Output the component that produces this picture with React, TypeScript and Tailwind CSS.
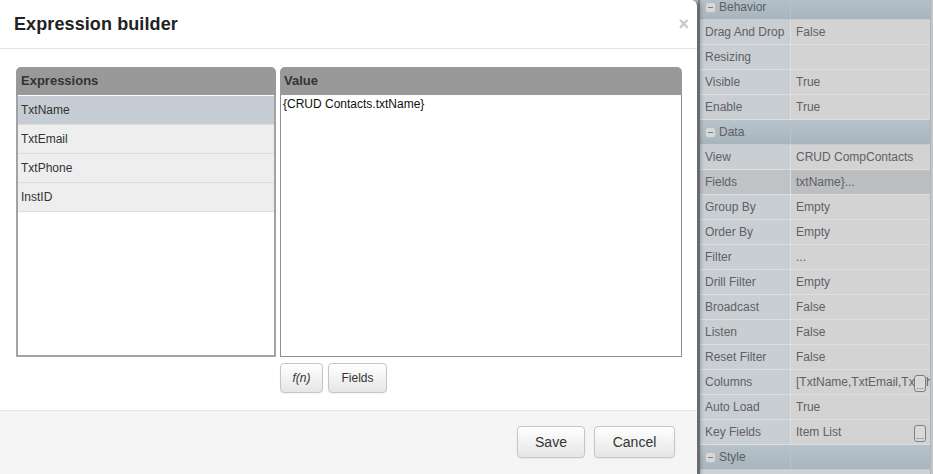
import React from 'react';

type Row = { label: string; value?: string; header?: boolean; selected?: boolean; dots?: boolean };

const rows: Row[] = [
  { label: 'Behavior', header: true },
  { label: 'Drag And Drop', value: 'False' },
  { label: 'Resizing', value: '' },
  { label: 'Visible', value: 'True' },
  { label: 'Enable', value: 'True' },
  { label: 'Data', header: true },
  { label: 'View', value: 'CRUD CompContacts' },
  { label: 'Fields', value: 'txtName}...', selected: true },
  { label: 'Group By', value: 'Empty' },
  { label: 'Order By', value: 'Empty' },
  { label: 'Filter', value: '...' },
  { label: 'Drill Filter', value: 'Empty' },
  { label: 'Broadcast', value: 'False' },
  { label: 'Listen', value: 'False' },
  { label: 'Reset Filter', value: 'False' },
  { label: 'Columns', value: '[TxtName,TxtEmail,TxtPhone,InstID]', dots: true },
  { label: 'Auto Load', value: 'True' },
  { label: 'Key Fields', value: 'Item List', dots: true },
  { label: 'Style', header: true },
];

const expressions = ['TxtName', 'TxtEmail', 'TxtPhone', 'InstID'];

function Minus() {
  return (
    <span className="inline-flex items-center justify-center w-[11px] h-[11px] rounded-[3px] bg-[#d6d8da] border border-[#b9bcbf] mr-[3px]">
      <span className="block w-[5px] h-px bg-[#7a7d80]" />
    </span>
  );
}

function PropertyGrid() {
  return (
    <div className="flex-1 min-w-0 h-full bg-[#cfd2d4] border-l-2 border-[#8a8d90] overflow-hidden flex">
      <div className="flex-1 min-w-0 -mt-[5px]">
        {rows.map((r, i) =>
          r.header ? (
            <div key={i} className="flex h-[25px] bg-gradient-to-b from-[#b7c2ca] to-[#a8b5bf] border-b border-[#c4ccd2]">
              <div className="w-[91px] shrink-0 flex items-center pl-[5px] text-[12px] text-[#5c6064] border-r border-[#b9c3ca]">
                <Minus />
                {r.label}
              </div>
              <div className="flex-1" />
            </div>
          ) : (
            <div key={i} className="flex h-[25px] border-b border-[#dcdee0]">
              <div
                className={`w-[91px] shrink-0 flex items-center pl-[5px] text-[12px] text-[#5e6166] border-r border-[#dcdee0] whitespace-nowrap overflow-hidden ${
                  r.selected ? 'bg-[#bfc3c6]' : 'bg-[#c9ced2]'
                }`}>
                {r.label}
              </div>
              <div
                className={`relative flex-1 min-w-0 flex pl-[5px] text-[12px] text-[#5e6166] whitespace-nowrap overflow-hidden ${
                  r.selected ? 'bg-[#bcbec0] items-start pt-[3px]' : 'bg-[#d3d3d3] items-center'
                }`}>
                {r.value}
                {r.dots &&
                  <span className="absolute right-[4px] top-[5px] w-[12px] h-[17px] rounded-[3px] border border-[#7d7f82] bg-[#d9d9d9] text-[9px] leading-[20px] text-center text-[#555]">
                    ...
                  </span>
                }
              </div>
            </div>
          )
        )}
      </div>
      <div className="w-[3px] shrink-0 bg-[#c3c5c7] border-l border-[#b3b5b7]" />
    </div>
  );
}

function Btn({ children, className = '' }: { children: React.ReactNode; className?: string }) {
  return (
    <button
      className={`border border-[#c5c5c5] rounded-[4px] bg-gradient-to-b from-white to-[#e6e6e6] text-[#333] shadow-[inset_0_1px_0_rgba(255,255,255,0.6),0_1px_2px_rgba(0,0,0,0.05)] ${className}`}>
      {children}
    </button>
  );
}

function Modal() {
  return (
    <div className="w-[698px] h-[500px] shrink-0 bg-white rounded-tr-[6px] border-r border-[#6b6d70] shadow-[2px_0_4px_rgba(0,0,0,0.35)] flex flex-col z-10">
      <div className="h-[49px] shrink-0 flex items-center justify-between pl-[14px] pr-[8px] border-b border-[#e5e5e5]">
        <h1 className="text-[18px] font-bold text-[#222] tracking-[0.1px] mt-[1px]">Expression builder</h1>
        <span className="text-[18px] font-bold text-[#c8c8c8] leading-none">×</span>
      </div>

      <div className="shrink-0 pt-[18px] pl-[16px] pb-[17px]">
        <div className="flex gap-[4px] h-[290px]">
          <div className="w-[260px] flex flex-col">
            <div className="h-[28px] shrink-0 bg-[#999] rounded-t-[5px] flex items-center pl-[5px] text-[13px] font-bold text-[#333]">
              Expressions
            </div>
            <div className="flex-1 border-2 border-t-0 border-[#a3a3a3] bg-white pt-[1px]">
              {expressions.map((e, i) =>
                <div
                  key={e}
                  className={`h-[29px] flex items-center pl-[3px] text-[12px] text-[#333] border-b border-[#dcdcdc] ${
                    i === 0 ? 'bg-[#c5ccd3]' : 'bg-[#eeeeee]'
                  }`}>
                  {e}
                </div>
              )}
            </div>
          </div>

          <div className="w-[402px] flex flex-col">
            <div className="h-[28px] shrink-0 bg-[#999] rounded-t-[5px] flex items-center pl-[4px] text-[13px] font-bold text-[#333]">
              Value
            </div>
            <div className="flex-1 border border-t-0 border-[#8f8f8f] bg-white pl-[2px] text-[12px] text-[#111]">
              {'{CRUD Contacts.txtName}'}
            </div>
          </div>
        </div>

        <div className="flex gap-[5px] pl-[264px] mt-[6px]">
          <Btn className="w-[43px] h-[30px] text-[12px] italic">f(n)</Btn>
          <Btn className="w-[59px] h-[30px] text-[12px]">Fields</Btn>
        </div>
      </div>

      <div className="flex-1 bg-[#f5f5f5] border-t border-[#e5e5e5] flex justify-end items-start gap-[9px] pt-[15px] pr-[22px]">
        <Btn className="w-[68px] h-[32px] text-[14px]">Save</Btn>
        <Btn className="w-[81px] h-[32px] text-[14px]">Cancel</Btn>
      </div>
    </div>
  );
}

export default function App() {
  return (
    <div
      className="w-[933px] h-[474px] overflow-hidden flex bg-[#cfd2d4]"
      style={{ fontFamily: '"Liberation Sans", Arial, sans-serif' }}>
      <Modal />
      <PropertyGrid />
    </div>
  );
}
